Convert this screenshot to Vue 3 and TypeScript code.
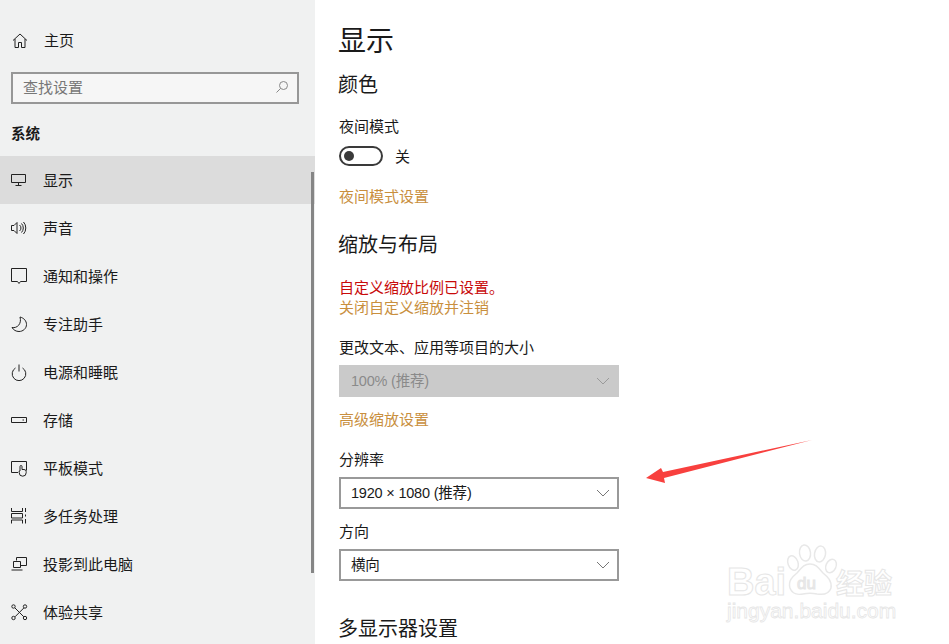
<template>
  <div class="page">
    <aside class="sidebar">
      <div class="home-row">
        <svg class="icon" viewBox="0 0 18 18"><path d="M3 8.500 10 2l7 6.500M5 7v8.500h3.500V10.500h3V15.500H15V7" /></svg>
        <span class="home-label">主页</span>
      </div>
      <div class="search">
        <span>查找设置</span>
        <svg class="search-icon" viewBox="0 0 14 14"><circle cx="8.500" cy="5.500" r="4" /><path d="M5.500 8.500 1.500 12.500" /></svg>
      </div>
      <div class="group">系统</div>
      <nav>
        <div v-for="item in navItems" :key="item.label" class="nav-row" :class="{ active: item.active }">
          <svg class="icon" viewBox="0 0 18 18" v-html="item.icon"></svg>
          <span>{{ item.label }}</span>
        </div>
      </nav>
      <div class="scrollbar"></div>
    </aside>

    <main class="content">
      <h1>显示</h1>
      <h2 class="color-head">颜色</h2>
      <div class="label night-label">夜间模式</div>
      <div class="toggle-row">
        <span class="toggle"><i></i></span>
        <span>关</span>
      </div>
      <a class="link night-link">夜间模式设置</a>
      <h2 class="scale-head">缩放与布局</h2>
      <div class="warn">自定义缩放比例已设置。</div>
      <a class="link">关闭自定义缩放并注销</a>
      <div class="label change-label">更改文本、应用等项目的大小</div>
      <div class="select disabled">
        <span>100% (推荐)</span>
        <svg viewBox="0 0 14 8"><path d="M1 1l6 6 6-6" /></svg>
      </div>
      <a class="link adv-link">高级缩放设置</a>
      <div class="label res-label">分辨率</div>
      <div class="select">
        <span>1920 × 1080 (推荐)</span>
        <svg viewBox="0 0 14 8"><path d="M1 1l6 6 6-6" /></svg>
      </div>
      <div class="label dir-label">方向</div>
      <div class="select">
        <span>横向</span>
        <svg viewBox="0 0 14 8"><path d="M1 1l6 6 6-6" /></svg>
      </div>
      <h2 class="multi-head">多显示器设置</h2>
    </main>

    <svg class="arrow" viewBox="0 0 949 644">
      <polygon points="812,440 664,478 665,483 646,478 661,468 663,472" />
    </svg>

    <svg class="watermark" viewBox="0 0 949 644">
      <g class="paw">
        <ellipse cx="793" cy="563" rx="5" ry="7.500" transform="rotate(-20 793 563)" />
        <ellipse cx="805" cy="553" rx="5.500" ry="8" transform="rotate(-8 805 553)" />
        <ellipse cx="820" cy="554" rx="5.500" ry="8" transform="rotate(10 820 554)" />
        <ellipse cx="831" cy="566" rx="5" ry="7" transform="rotate(25 831 566)" />
        <path d="M810 564c-7 0-9 5-13 9-5 4-9 8-7 15 2 6 8 7 13 6 5-1 9-1 14 0 6 1 12 0 14-6 1-7-3-11-8-15-4-4-6-9-13-9z" />
      </g>
      <text class="wm-du" x="797" y="589">du</text>
      <text class="wm-big" x="727" y="595">Bai</text>
      <text class="wm-cn" x="836" y="594">经验</text>
      <text class="wm-url" x="727" y="618">jingyan.baidu.com</text>
    </svg>
  </div>
</template>

<script setup lang="ts">
interface NavItem {
  label: string;
  icon: string;
  active?: boolean;
}

const navItems: NavItem[] = [
  { label: "显示", active: true, icon: '<path d="M1.500 3.500h14v8h-14zM8.500 11.500V14M5.500 14.500h6" />' },
  {
    label: "声音",
    icon: '<path d="M1.500 6.500H4l3-3v11l-3-3H1.500zM9.500 6a3.800 3.800 0 0 1 0 6M11.500 4.500a6.500 6.500 0 0 1 0 9M13.500 3a9 9 0 0 1 0 12" />',
  },
  { label: "通知和操作", icon: '<path d="M1.500 1.500h15v13h-6L9 16.500l-1.500-2h-6z" />' },
  {
    label: "专注助手",
    icon: '<path d="M10 2c4 1 6.500 4 6.500 7.500 0 4-3.500 7-7.500 7-3 0-5.500-1.500-7-4 5 1 10-3.500 8-10.500z" />',
  },
  { label: "电源和睡眠", icon: '<path d="M5.500 5a6.800 6.800 0 1 0 7 0M9 1.500v7" />' },
  { label: "存储", icon: '<path d="M1.500 6.500h15v5h-15zM12.500 9h1.500" />' },
  {
    label: "平板模式",
    icon: '<path d="M8 13.500H1.500v-11h15v9M10 12V7.500a1 1 0 0 1 2 0v3h2a2.200 2.200 0 0 1 2.200 2.200v1a3.500 3.500 0 0 1-7 0V12z" />',
  },
  {
    label: "多任务处理",
    icon: '<path d="M1.500 1v3.500h11V1M1.500 6.500h11v4.500h-11zM1.500 16.500V13h11v3.500M15.500 1v4M15.500 7.500v2M15.500 12v4.500" />',
  },
  {
    label: "投影到此电脑",
    icon: '<path d="M6.500 5.500v-3h10v8h-6M3.500 6.500h7v6h-7zM1.500 15h11" />',
  },
  {
    label: "体验共享",
    icon: '<circle cx="3.500" cy="3.500" r="1.700" /><circle cx="15" cy="3.500" r="1.700" /><circle cx="3.500" cy="15" r="1.700" /><circle cx="15" cy="15" r="1.700" /><path d="M5 5l8.800 8.800M13.800 5 5 13.800" />',
  },
];
</script>

<style>
html,
body {
  margin: 0;
  background: #fff;
}
</style>

<style scoped>
.page {
  position: relative;
  display: flex;
  width: 949px;
  height: 644px;
  overflow: hidden;
  background: #fff;
  color: #1a1a1a;
  font-family: "Noto Sans CJK SC", "Open Sans", sans-serif;
  font-size: 15px;
  line-height: 20px;
}

.sidebar {
  position: relative;
  flex: 0 0 315px;
  padding-top: 17px;
  box-sizing: border-box;
  background: #f0f1f1;
}

.icon {
  flex: 0 0 18px;
  width: 18px;
  height: 18px;
  fill: none;
  stroke: #222;
  stroke-width: 1;
}

.home-row,
.nav-row {
  display: flex;
  align-items: center;
  height: 48px;
  padding-left: 10px;
}

.home-row span,
.nav-row span {
  margin-left: 15px;
}

.home-row .home-label {
  margin: 0 0 2px 16px;
}

.nav-row.active {
  background: #dcdcdc;
}

.search {
  display: flex;
  align-items: center;
  justify-content: space-between;
  box-sizing: border-box;
  width: 288px;
  height: 32px;
  margin: 7px 0 0 11px;
  padding: 0 8px 2px 10px;
  border: 2px solid #979797;
  background: #f6f6f6;
  color: #777;
}

.search-icon {
  width: 14px;
  height: 14px;
  fill: none;
  stroke: #888;
  stroke-width: 1;
}

.group {
  margin: 19px 0 13px 11px;
  font-weight: 700;
  font-size: 14.500px;
}

.scrollbar {
  position: absolute;
  top: 172px;
  left: 311px;
  width: 3px;
  height: 401px;
  background: #858585;
}

.content {
  flex: 1;
  padding: 19px 0 0 24px;
}

h1,
h2 {
  margin: 0 0 0 -1px;
  font-weight: 400;
}

h1 {
  font-size: 28px;
  line-height: 40px;
}

h2 {
  font-size: 20px;
  line-height: 28px;
}

.color-head {
  margin-top: 11px;
}

.scale-head {
  margin-top: 24px;
}

.multi-head {
  margin-top: 33px;
}

.label {
  display: block;
}

.night-label {
  margin-top: 18px;
}

.change-label {
  margin-top: 20px;
}

.res-label {
  margin-top: 20px;
}

.dir-label {
  margin-top: 12px;
}

.toggle-row {
  display: flex;
  align-items: center;
  gap: 12px;
  margin-top: 10px;
}

.toggle {
  display: flex;
  align-items: center;
  box-sizing: border-box;
  width: 44px;
  height: 20px;
  padding-left: 3px;
  border: 2px solid #3a3a3a;
  border-radius: 10px;
}

.toggle i {
  width: 10px;
  height: 10px;
  border-radius: 50%;
  background: #3a3a3a;
}

.link {
  display: block;
  color: #c98f3e;
}

.night-link {
  margin-top: 20px;
}

.adv-link {
  margin-top: 12px;
}

.warn {
  margin-top: 19px;
  color: #c80a0a;
}

.select {
  display: flex;
  align-items: center;
  justify-content: space-between;
  box-sizing: border-box;
  width: 280px;
  height: 32px;
  margin-top: 8px;
  padding: 0 7px 0 10px;
  border: 2px solid #999;
  background: #fff;
  font-family: "Liberation Sans", "Noto Sans CJK SC", sans-serif;
  font-size: 14.500px;
  letter-spacing: -0.200px;
}

.select svg {
  width: 14px;
  height: 8px;
  fill: none;
  stroke: #777;
  stroke-width: 1;
}

.select.disabled {
  border-color: #cacaca;
  background: #cacaca;
  color: #8a8a8a;
}

.select.disabled svg {
  stroke: #9a9a9a;
}

.arrow,
.watermark {
  position: absolute;
  top: 0;
  left: 0;
  width: 949px;
  height: 644px;
  pointer-events: none;
}

.arrow polygon {
  fill: #f8403e;
}

.paw ellipse,
.paw path {
  fill: #fff;
  stroke: #e8e8e8;
  stroke-width: 1.500;
}

.watermark text {
  font-family: "Liberation Sans", sans-serif;
  fill: #fff;
  stroke: #e6e6e6;
  stroke-width: 1;
}

.watermark .wm-big {
  font-size: 38px;
  font-weight: 700;
}

.watermark .wm-du {
  font-size: 17px;
  fill: #ececec;
}

.watermark .wm-cn {
  font-family: "Noto Sans CJK SC", sans-serif;
  font-size: 28px;
  font-weight: 700;
}

.watermark .wm-url {
  font-size: 21px;
  stroke-width: 0.800;
}
</style>
